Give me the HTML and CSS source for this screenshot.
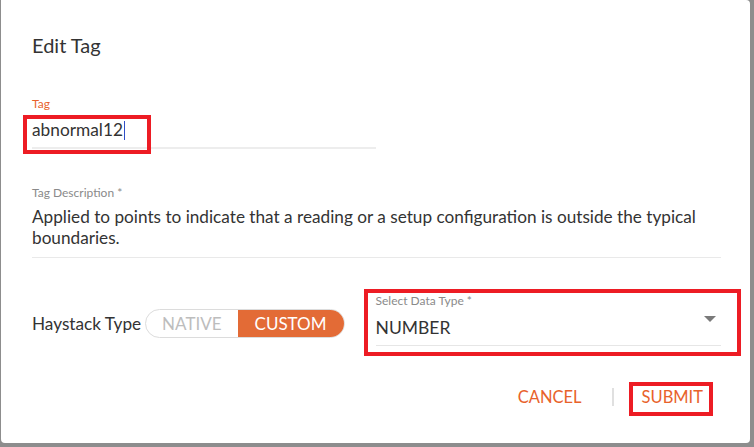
FILE: index.html
```html
<!DOCTYPE html>
<html lang="en">
<head>
    <meta charset="UTF-8">
    <title>Edit Tag</title>
    <link rel="stylesheet" href="styles.css">
</head>
<body>
<div class="dialog">
    <h2 class="title">Edit Tag</h2>

    <div class="tag-field">
        <label class="label active">Tag</label>
        <div class="tag-value mark mark-tag">abnormal12<span class="caret"></span></div>
    </div>

    <div class="desc-field">
        <label class="label">Tag Description *</label>
        <p class="desc-text">Applied to points to indicate that a reading or a setup configuration is outside the typical boundaries.</p>
    </div>

    <div class="type-row">
        <div class="haystack">
            <span class="haystack-label">Haystack Type</span>
            <div class="toggle">
                <span class="seg">NATIVE</span>
                <span class="seg active">CUSTOM</span>
            </div>
        </div>
        <div class="select-field mark mark-select">
            <label class="label">Select Data Type *</label>
            <div class="select-value">
                <span>NUMBER</span>
                <svg class="arrow" width="12" height="6" viewBox="0 0 12 6"><polygon points="0,0 12,0 6,6" fill="#7a7a7a"/></svg>
            </div>
        </div>
    </div>

    <div class="actions">
        <button class="btn">CANCEL</button>
        <span class="sep"></span>
        <button class="btn mark mark-submit">SUBMIT</button>
    </div>
</div>
</body>
</html>
```

FILE: styles.css
```css
*, *::after{
    margin: 0;
    padding: 0;
    box-sizing: border-box;
}
body{
    background: #8d8d8d;
    font-family: Lato, "Open Sans", sans-serif;
    color: #333333;
}
.dialog{
    width: 749px;
    height: 443px;
    margin-left: 1px;
    background: #ffffff;
    border-radius: 0 4px 4px 4px;
    padding: 33px 29px 0 31px;
}
.title{
    font-size: 20px;
    font-weight: 400;
    line-height: 24px;
    color: #333333;
}
.label{
    display: block;
    font-size: 12px;
    line-height: 14px;
    color: #8a8a8a;
}
.label.active{
    color: #e8622b;
}

/* red annotation boxes */
.mark{
    position: relative;
}
.mark::after{
    content: "";
    position: absolute;
    border: 4px solid #ed1c24;
}
.mark-tag::after{
    left: -9px;
    top: 4px;
    width: 128px;
    height: 39px;
}
.mark-select::after{
    left: -12px;
    top: -5px;
    width: 377px;
    height: 67px;
}
.mark-submit::after{
    left: -1px;
    top: -1px;
    width: 84px;
    height: 34px;
}

.tag-field{
    width: 344px;
    margin-top: 40px;
}
.tag-value{
    padding: 9px 0 7px;
    font-size: 17.3px;
    line-height: 20px;
    border-bottom: 2px solid #ededed;
}
.caret{
    display: inline-block;
    width: 1px;
    height: 19px;
    margin-left: 1px;
    background: #2f4fc9;
    vertical-align: -4px;
}

.desc-field{
    margin-top: 37px;
    padding-bottom: 9px;
    border-bottom: 1px solid #e9e9e9;
}
.desc-text{
    margin-top: 6px;
    font-size: 17.2px;
    line-height: 21px;
}

.type-row{
    display: flex;
    align-items: flex-start;
}
.haystack{
    display: flex;
    align-items: center;
    flex-shrink: 0;
    margin-top: 51px;
}
.haystack-label{
    font-size: 17.2px;
    line-height: 20px;
    white-space: nowrap;
    margin-right: 4px;
}
.toggle{
    display: flex;
    height: 29px;
    border: 1px solid #dcdcdc;
    border-radius: 15px;
    overflow: hidden;
}
.seg{
    padding: 0 16px;
    font-size: 17px;
    line-height: 27px;
    color: #bdbdbd;
}
.seg.active{
    padding: 0 17px;
    background: #e36b36;
    color: #ffffff;
}

.select-field{
    width: 345px;
    margin: 36px 0 0 31px;
}
.select-value{
    display: flex;
    justify-content: space-between;
    align-items: flex-start;
    margin-top: 10px;
    padding-bottom: 7px;
    font-size: 17.5px;
    line-height: 20px;
    border-bottom: 1px solid #e6e6e6;
}
.arrow{
    margin: -2px 5px 0 0;
}

.actions{
    display: flex;
    justify-content: flex-end;
    align-items: center;
    margin: 37px 6px 0 0;
}
.btn{
    border: none;
    background: none;
    padding: 4px 12px;
    font-family: Lato, "Open Sans", sans-serif;
    font-size: 16.5px;
    line-height: 20px;
    color: #e8622b;
}
.sep{
    width: 2px;
    height: 18px;
    margin: 0 16px 0 18px;
    background: #e0e0e0;
}
```
